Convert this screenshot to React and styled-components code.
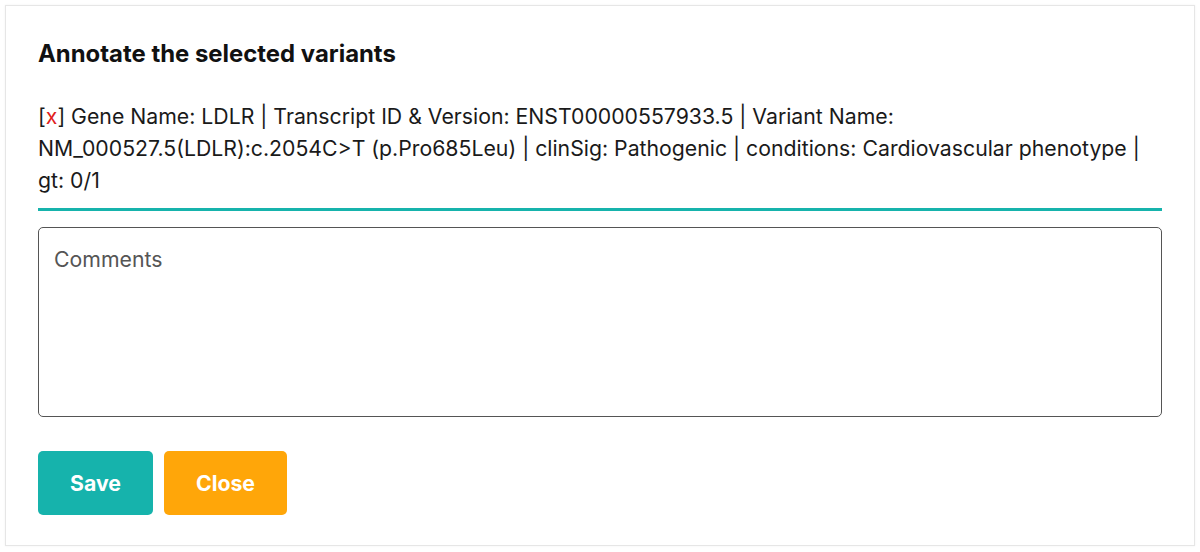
import React from "react";
import styled, { createGlobalStyle } from "styled-components";

const Global = createGlobalStyle`
  body { margin: 0; background: #fff; font-family: Inter, "Noto Sans", sans-serif; }
`;

const Page = styled.div`
  padding: 5px;
`;

const Panel = styled.div`
  border: 1px solid #e6e6e6;
  box-shadow: 0 0 2px rgba(0,0,0,0.06);
  padding: 34px 32px 32px 32px;
  height: 541px;
  box-sizing: border-box;
`;

const Title = styled.h2`
  margin: 0 0 32px;
  font-size: 23.9px;
  font-weight: 700;
  line-height: 28px;
  color: #111;
`;

const Summary = styled.div`
  font-size: 21.25px;
  line-height: 32px;
  color: #1a1a1a;
  padding-bottom: 12px;
  border-bottom: 3px solid #16b3ac;
`;

const Remove = styled.span`
  color: #e11d1d;
`;

const Comments = styled.textarea`
  display: block;
  width: 100%;
  box-sizing: border-box;
  margin-top: 16px;
  height: 190px;
  border: 1px solid #555;
  border-radius: 5px;
  padding: 18px 15px;
  font-family: Inter, "Noto Sans", sans-serif;
  font-size: 21.25px;
  resize: none;
  outline: none;
  &::placeholder { color: #555; }
`;

const Actions = styled.div`
  display: flex;
  gap: 11px;
  margin-top: 34px;
`;

const Button = styled.button`
  height: 64px;
  padding: 0 ${p => p.$px}px;
  border: none;
  border-radius: 5px;
  background: ${p => p.$bg};
  color: #fff;
  font-family: Inter, "Noto Sans", sans-serif;
  font-size: 21.25px;
  font-weight: 700;
  cursor: pointer;
`;

export default function App() {
  return (
    <Page>
      <Global />
      <Panel>
        <Title>Annotate the selected variants</Title>
        <Summary>
          [<Remove>x</Remove>] Gene Name: LDLR | Transcript ID &amp; Version: ENST00000557933.5 | Variant Name: NM_000527.5(LDLR):c.2054C&gt;T (p.Pro685Leu) | clinSig: Pathogenic | conditions: Cardiovascular phenotype | gt: 0/1
        </Summary>
        <Comments placeholder="Comments" />
        <Actions>
          <Button $bg="#16b3ac" $px={32}>Save</Button>
          <Button $bg="#ffa609" $px={32}>Close</Button>
        </Actions>
      </Panel>
    </Page>
  );
}
